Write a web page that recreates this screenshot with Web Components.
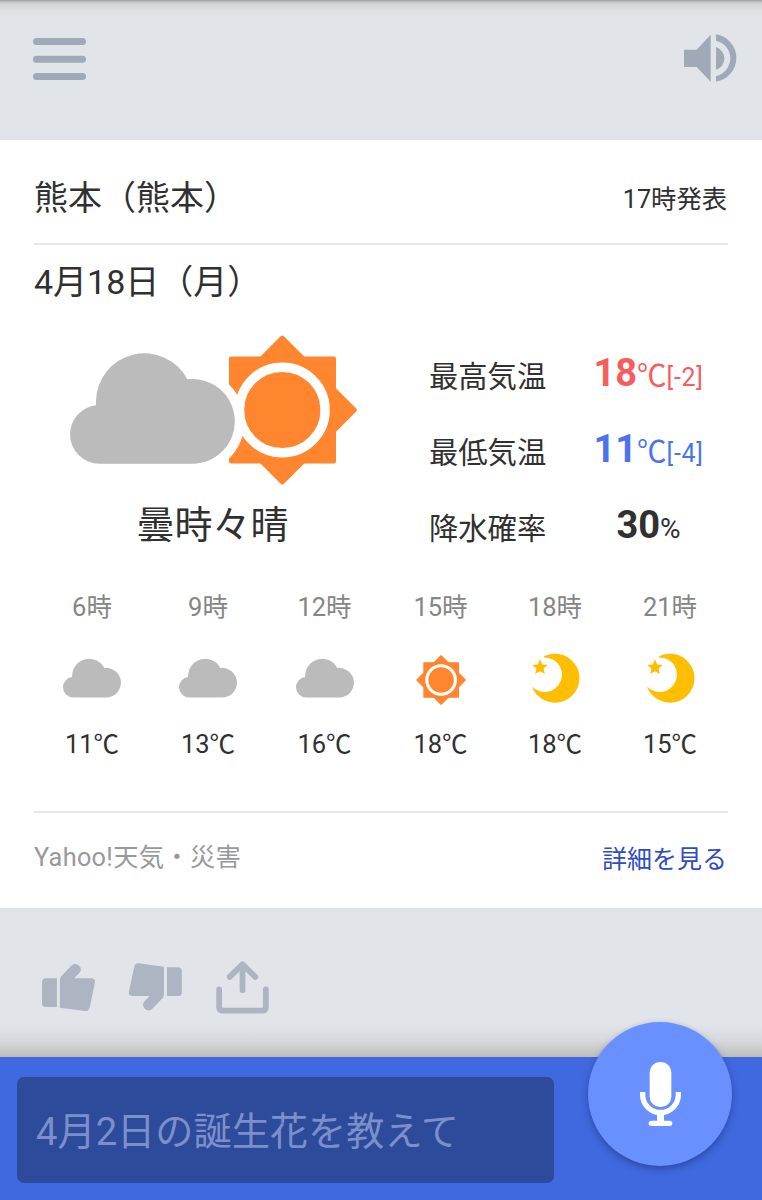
<!DOCTYPE html>
<html lang="ja">
<head>
<meta charset="utf-8">
<title>天気</title>
<style>
    body {
        margin: 0;
        background: #e1e4e9;
        color: #303030;
        font-family: Roboto, "Noto Sans CJK JP", sans-serif;
    }
</style>
</head>
<body>
<assistant-screen>
    <top-bar slot="header"></top-bar>
    <weather-card place="熊本（熊本）" issued="17時発表" date="4月18日（月）">
        <weather-summary slot="summary">曇時々晴</weather-summary>
        <temp-row slot="detail" label="最高気温" value="18" unit="℃" diff="[-2]" style="color: #f85c5c"></temp-row>
        <temp-row slot="detail" label="最低気温" value="11" unit="℃" diff="[-4]" style="color: #4a74ee"></temp-row>
        <temp-row slot="detail" label="降水確率" value="30" unit="%"></temp-row>
        <hour-item slot="hours" time="6時" icon="cloud">11℃</hour-item>
        <hour-item slot="hours" time="9時" icon="cloud">13℃</hour-item>
        <hour-item slot="hours" time="12時" icon="cloud">16℃</hour-item>
        <hour-item slot="hours" time="15時" icon="sun">18℃</hour-item>
        <hour-item slot="hours" time="18時" icon="moon">18℃</hour-item>
        <hour-item slot="hours" time="21時" icon="moon">15℃</hour-item>
        <span slot="source">Yahoo!天気・災害</span>
        <span slot="link">詳細を見る</span>
    </weather-card>
    <action-row slot="actions"></action-row>
    <voice-bar slot="footer">4月2日の誕生花を教えて</voice-bar>
</assistant-screen>

<script>
const THUMB = `
    <path d="M171 144H138Q126 144 126 156V219Q126 231 138 231H171Z"/>
    <path d="M180 233V150Q180 142 186 136L216 105A16.5 16.5 0 0 1 240 127L223 144H275Q287 144 286 156L270 232Q267 244 256 243Z"/>`;

const ICONS = {
    menu: {
        box: '0 0 53 42', width: 53, height: 42,
        body: `<rect width="53" height="7" rx="3.5"/>
               <rect y="17.8" width="53" height="7" rx="3.5"/>
               <rect y="35" width="53" height="7" rx="3.5"/>`
    },
    speaker: {
        box: '909 102 159 144', width: 53, height: 48,
        body: `<path d="M909 149H947L989 104V245L947 201H909Z"/>
               <path d="M1005 141A36.3 36.3 0 0 1 1005 210Z"/>
               <path d="M1005 103A71.8 71.8 0 0 1 1005 245V228A54.2 54.2 0 0 0 1005 122Z"/>`
    },
    cloud: {
        box: '70 352 165 112', width: 58, height: 40,
        body: `<path fill="#bbb" d="M99.5 463.7A29.5 29.3 0 0 1 70 434.4A29.5 29.3 0 0 1 96 405.3V401A48.5 48.5 0 0 1 187.4 379.2A42.4 42.4 0 1 1 192.5 463.7Z"/>`
    },
    sun: {
        box: '207 335 150 150', width: 50, height: 50,
        body: `<g fill="#ff862f" stroke="#ff862f" stroke-width="4" stroke-linejoin="round">
                   <path d="M231 358.5H334V461.5H231Z"/>
                   <path d="M282.3 337.5L354.8 410L282.3 482.5L209.8 410Z"/>
               </g>
               <circle cx="282.3" cy="410" r="42.8" fill="none" stroke="#fff" stroke-width="9.4"/>`
    },
    moon: {
        box: '0 0 50 50', width: 50, height: 50,
        body: `<g fill="#ffbe00">
                   <path d="M14 3.3A24.5 24.5 0 1 1 1.9 33.4A17.3 17.3 0 1 0 14 4.4Z"/>
                   <path d="M10 6.3L12.2 11.4L17.8 11.9L13.6 15.6L14.9 21L10 18.2L5.1 21L6.4 15.6L2.2 11.9L7.8 11.4Z"/>
               </g>`
    },
    good: {box: '126 92 160 160', width: 53, height: 53, body: THUMB},
    bad: {
        box: '387 92 160 160', width: 53, height: 53,
        body: `<g transform="rotate(180 336.3 171)">${THUMB}</g>`
    },
    share: {
        box: '647.5 92 160 160', width: 53, height: 53,
        body: `<g fill="none" stroke="currentColor" stroke-width="17.5" stroke-linecap="round" stroke-linejoin="round">
                   <path d="M657 178V230Q657 242 669 242H786Q798 242 798 230V178"/>
                   <path d="M727.5 102V180M689 140L727.5 102L766 140"/>
               </g>`
    },
    mic: {
        box: '420 186 123 192', width: 41, height: 64,
        body: `<rect x="449" y="186" width="65" height="135" rx="31"/>
               <path fill="none" stroke="currentColor" stroke-width="16" d="M428 276V284A53.5 53.5 0 0 0 535 284V276"/>
               <path d="M471 340H492V362H509A8 8 0 0 1 509 378H454A8 8 0 0 1 454 362H471Z"/>`
    }
};

// Cloud in front of the sun, separated by a white outline
ICONS.cloudSun = {
    box: '70 334 288 152', width: 288, height: 152,
    body: `${ICONS.sun.body}
           <circle cx="192.5" cy="421.5" r="52" fill="#fff"/>
           ${ICONS.cloud.body}`
};

function svg(name) {
    const icon = ICONS[name];
    return `<svg viewBox="${icon.box}" width="${icon.width}" height="${icon.height}" fill="currentColor">${icon.body}</svg>`;
}

class BaseElement extends HTMLElement {
    constructor() {
        super();
        this.attachShadow({mode: 'open'});
    }

    connectedCallback() {
        this.shadowRoot.innerHTML = `<style>svg { display: block; }</style>${this.render()}`;
    }
}

class AssistantScreen extends BaseElement {
    render() {
        return `
            <style>
                :host {
                    display: flex;
                    flex-direction: column;
                    width: 762px;
                    height: 1200px;
                    overflow: hidden;
                }
                main { flex: 1; }
            </style>
            <slot name="header"></slot>
            <main><slot></slot></main>
            <slot name="actions"></slot>
            <slot name="footer"></slot>
        `;
    }
}

class TopBar extends BaseElement {
    render() {
        return `
            <style>
                :host {
                    display: flex;
                    justify-content: space-between;
                    align-items: flex-start;
                    box-sizing: border-box;
                    height: 140px;
                    padding: 34px 25px 0 33px;
                    color: #a0a9b8;
                    background: linear-gradient(#a2a6aa 0, #a8acaf 1px, #c5c9cb 2px, #d3d7d9 5px, #dce0e2 10px, #e1e4e9 18px);
                }
                .menu { padding-top: 4px; }
            </style>
            <div class="menu">${svg('menu')}</div>
            <div>${svg('speaker')}</div>
        `;
    }
}

class WeatherCard extends BaseElement {
    render() {
        return `
            <style>
                :host {
                    display: block;
                    box-sizing: border-box;
                    height: 768px;
                    padding: 0 34px;
                    background: #fff;
                }
                header, footer {
                    display: flex;
                    justify-content: space-between;
                    align-items: center;
                }
                header {
                    box-sizing: border-box;
                    height: 105px;
                    border-bottom: 2px solid #e5e6e9;
                }
                .place, .date { font-size: 34px; line-height: 40px; }
                .place { padding-top: 13px; }
                .issued { font-size: 25.3px; padding: 11px 1px 0 0; }
                .date { padding-top: 17px; height: 71px; }
                .now { display: flex; height: 252px; }
                .details {
                    padding: 2px 0 0 35px;
                    height: 250px;
                }
                .hours {
                    display: grid;
                    grid-template-columns: 116px 116px 117px 115px 114px 116px;
                    height: 226px;
                }
                footer {
                    border-top: 2px solid #e4e7ec;
                    height: 84px;
                    font-size: 25.3px;
                }
                .source { color: #999; letter-spacing: 0.3px; }
                .link { color: #304cc0; font-size: 25px; padding: 4px 1px 0 0; }
            </style>
            <header>
                <div class="place">${this.getAttribute('place')}</div>
                <div class="issued">${this.getAttribute('issued')}</div>
            </header>
            <div class="date">${this.getAttribute('date')}</div>
            <div class="now">
                <slot name="summary"></slot>
                <div class="details"><slot name="detail"></slot></div>
            </div>
            <div class="hours"><slot name="hours"></slot></div>
            <footer>
                <div class="source"><slot name="source"></slot></div>
                <div class="link"><slot name="link"></slot></div>
            </footer>
        `;
    }
}

class WeatherSummary extends BaseElement {
    render() {
        return `
            <style>
                :host { display: block; width: 360px; }
                .icon { padding: 1px 0 0 36px; }
                .text {
                    margin-top: 13px;
                    padding-right: 3px;
                    text-align: center;
                    font-size: 38px;
                    line-height: 52px;
                }
            </style>
            <div class="icon">${svg('cloudSun')}</div>
            <div class="text"><slot></slot></div>
        `;
    }
}

class TempRow extends BaseElement {
    render() {
        const diff = this.getAttribute('diff');
        return `
            <style>
                :host {
                    display: flex;
                    height: 76px;
                    line-height: 76px;
                    white-space: nowrap;
                }
                .label { width: 154px; padding-top: 4px; font-size: 29.3px; color: #303030; }
                .value { width: 131px; text-align: center; }
                b { font-size: 38px; font-weight: 700; }
                .unit { font-size: ${diff ? 29.5 : 28}px; }
                .diff { font-size: 25px; letter-spacing: 0.7px; }
            </style>
            <div class="label">${this.getAttribute('label')}</div>
            <div class="value"><b>${this.getAttribute('value')}</b><span class="unit">${this.getAttribute('unit')}</span>${diff ? `<span class="diff">${diff}</span>` : ''}</div>
        `;
    }
}

class HourItem extends BaseElement {
    render() {
        return `
            <style>
                :host {
                    display: flex;
                    flex-direction: column;
                    align-items: center;
                    font-size: 25.5px;
                    line-height: 36px;
                }
                .time { padding-top: 4px; color: #858585; }
                .icon {
                    display: flex;
                    align-items: center;
                    height: 50px;
                    margin: 28px 0 23px;
                }
                .sun { margin: 30px 0 21px; }
            </style>
            <div class="time">${this.getAttribute('time')}</div>
            <div class="icon ${this.getAttribute('icon')}">${svg(this.getAttribute('icon'))}</div>
            <div><slot></slot></div>
        `;
    }
}

class ActionRow extends BaseElement {
    render() {
        return `
            <style>
                :host {
                    display: flex;
                    align-items: flex-start;
                    gap: 34px;
                    box-sizing: border-box;
                    height: 149px;
                    padding: 53px 42px 0;
                    color: #adb5c3;
                    background: linear-gradient(transparent 116px, rgba(175, 175, 170, 0.2) 132px, rgba(165, 165, 160, 0.6) 149px);
                }
            </style>
            ${svg('good')}${svg('bad')}${svg('share')}
        `;
    }
}

class VoiceBar extends BaseElement {
    render() {
        return `
            <style>
                :host {
                    display: block;
                    position: relative;
                    box-sizing: border-box;
                    height: 143px;
                    padding: 20px 17px;
                    background: #4069df;
                }
                .field {
                    box-sizing: border-box;
                    width: 537px;
                    height: 106px;
                    padding-left: 19px;
                    border-radius: 7px;
                    background: #2d4a9b;
                    color: #7b90cb;
                    font-size: 38.2px;
                    line-height: 110px;
                }
                .mic {
                    position: absolute;
                    top: -35px;
                    right: 30px;
                    display: flex;
                    align-items: center;
                    justify-content: center;
                    width: 144px;
                    height: 144px;
                    border-radius: 50%;
                    background: #6890ff;
                    color: #fff;
                    box-shadow: 0 3px 7px rgba(20, 35, 90, 0.45);
                }
            </style>
            <div class="field"><slot></slot></div>
            <div class="mic">${svg('mic')}</div>
        `;
    }
}

customElements.define('assistant-screen', AssistantScreen);
customElements.define('top-bar', TopBar);
customElements.define('weather-card', WeatherCard);
customElements.define('weather-summary', WeatherSummary);
customElements.define('temp-row', TempRow);
customElements.define('hour-item', HourItem);
customElements.define('action-row', ActionRow);
customElements.define('voice-bar', VoiceBar);
</script>
</body>
</html>
